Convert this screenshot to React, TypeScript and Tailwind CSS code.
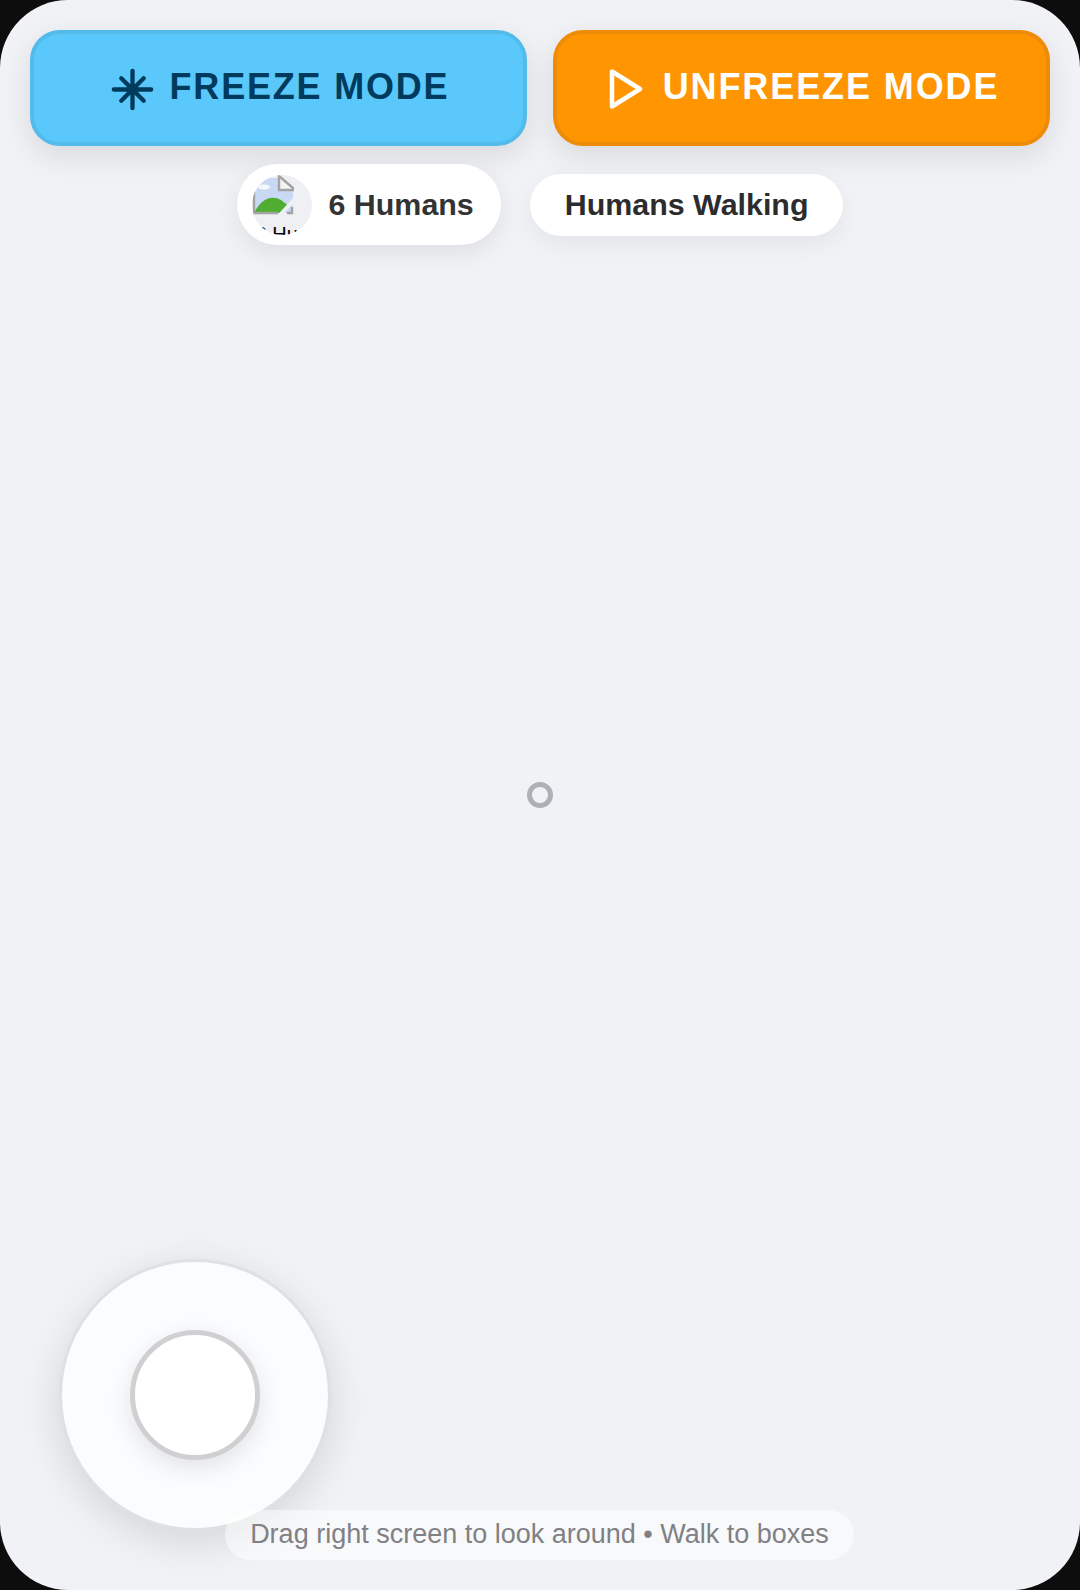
export default function App() {
  const font = { fontFamily: '"Liberation Sans", Arial, sans-serif' };
  return (
    <div className="w-[1080px] h-[1590px] bg-[#0d0d0d]" style={font}>
      <div className="relative w-full h-full rounded-[68px] bg-[#f0f2f5] overflow-hidden pt-[30px] px-[30px]">
        <div className="flex gap-[26px]">
          <button className="w-[497px] shrink-0 h-[116px] flex items-center justify-center gap-[16px] pl-[3px] rounded-[30px] bg-[#5ac8fa] border-[4px] border-[#53bbea] shadow-[0_10px_30px_rgba(0,0,0,0.1)] text-[#003a5c]">
            <svg width="43" height="43" viewBox="0 0 46 46" fill="none" stroke="#003a5c" strokeWidth="4.6" strokeLinecap="round" className="mt-[2px]">
              <path d="M23 3V43M3 23H43M11 11L35 35M35 11L11 35" />
            </svg>
            <span className="text-[36px] font-bold tracking-[1.8px] leading-none -mt-[2px]">FREEZE MODE</span>
          </button>
          <button className="w-[497px] shrink-0 h-[116px] flex items-center justify-center gap-[20px] pl-[5px] rounded-[30px] bg-[#ff9500] border-[4px] border-[#ee8c0a] shadow-[0_10px_30px_rgba(0,0,0,0.1)] text-white">
            <svg width="34" height="40" viewBox="0 0 34 40" fill="none" stroke="#ffffff" strokeWidth="4.5" strokeLinejoin="round" className="mt-[2px]">
              <path d="M3 2.5V37.5L31 20Z" />
            </svg>
            <span className="text-[36px] font-bold tracking-[1.9px] leading-none -mt-[2px]">UNFREEZE MODE</span>
          </button>
        </div>

        <div className="flex justify-center items-center gap-[29px] mt-[18px]">
          <div className="h-[81px] flex items-center pl-[15px] pr-[27px] gap-[17px] rounded-full bg-white shadow-[0_8px_24px_rgba(0,0,0,0.08)]">
            <div className="relative w-[60px] h-[60px] rounded-full bg-[#eef0f3] overflow-hidden shrink-0">
              <svg width="42" height="42" viewBox="0 0 42 42" className="block">
                <path d="M1 3H27V13H41V38H1Z" fill="#c9d9f4" />
                <ellipse cx="12" cy="12" rx="6" ry="2.5" fill="#f6f8fc" />
                <path d="M2 38C8 25 19 19 29 25L38 32L31 38Z" fill="#4fae32" />
                <path d="M27 1L41 13V15H27Z" fill="#f4f4f4" stroke="#a3a3a3" strokeWidth="2.4" />
                <path d="M2 12V38H26M40 32V38H35" stroke="#a3a3a3" strokeWidth="2.4" fill="none" />
                <path d="M27 41L42 25" stroke="#eef0f3" strokeWidth="4" />
              </svg>
              <span className="absolute left-[4px] top-[49px] text-[20px] leading-none text-black whitespace-nowrap">6 Humans</span>
            </div>
            <span className="text-[30.4px] font-bold text-[#333333] leading-none">6 Humans</span>
          </div>
          <div className="h-[62px] flex items-center px-[35px] rounded-full bg-white shadow-[0_8px_24px_rgba(0,0,0,0.06)]">
            <span className="text-[30.4px] font-bold text-[#2c2c2e] leading-none">Humans Walking</span>
          </div>
        </div>

        <div className="absolute left-[527px] top-[782px] w-[26px] h-[26px] rounded-full border-[5px] border-[#adb0b5]" />

        <div className="absolute left-[59px] top-[1259px] w-[272px] h-[272px] rounded-full bg-[#fbfcfd] border-[3px] border-[#dfe0e2] shadow-[0_10px_40px_rgba(0,0,0,0.12)] flex items-center justify-center">
          <div className="w-[130px] h-[130px] rounded-full bg-white border-[5px] border-[#d0d0d2] shadow-[0_8px_24px_rgba(0,0,0,0.1)]" />
        </div>

        <div className="absolute left-[225px] top-[1510px] w-[629px] h-[50px] flex items-center justify-center rounded-full bg-white/50">
          <span className="text-[27px] text-[#808085] leading-none -mt-[2px]">Drag right screen to look around • Walk to boxes</span>
        </div>
      </div>
    </div>
  );
}
